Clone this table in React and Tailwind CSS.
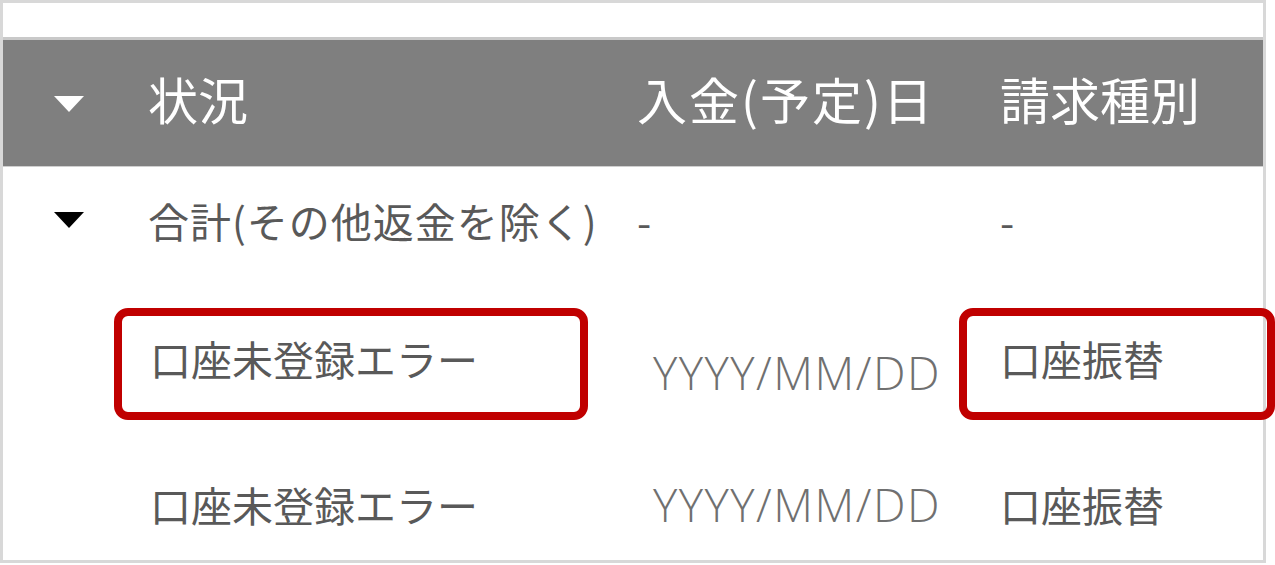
const rows = [
  { status: '口座未登録エラー', date: 'YYYY/MM/DD', type: '口座振替', marked: true },
  { status: '口座未登録エラー', date: 'YYYY/MM/DD', type: '口座振替', marked: false },
];

const jp = "font-['Noto_Sans_CJK_JP','Noto_Sans',sans-serif]";

const Caret = ({ color }) => (
  <svg width="32" height="18" viewBox="0 0 32 18">
    <polygon points="1,1 31,1 16,17" fill={color} />
  </svg>
);

const App = () => {
  return (
    <div className="w-[1275px] h-[565px] bg-white overflow-hidden">
      <div className={`relative w-[1266px] h-[563px] border-[3px] border-[#d8d8d8] ${jp}`}>
        <div className="h-[34px]" />

        {/* header */}
        <div className="flex items-center h-[130px] pb-[10px] bg-[#7f7f7f] border-t-[3px] border-[#c9c9c9] border-b border-b-[#cfcfcf] text-white text-[50px] leading-none">
          <div className="w-[145px] pl-[50px] pt-[12px] flex">
            <Caret color="#ffffff" />
          </div>
          <div className="w-[489px]">状況</div>
          <div className="w-[363px] tracking-[2px]">入金(予定)日</div>
          <div className="flex-1">請求種別</div>
        </div>

        {/* total row */}
        <div className="flex items-center h-[116px] pb-[10px] text-[#595959] text-[41px] leading-none">
          <div className="w-[145px] pl-[50px] flex">
            <Caret color="#000000" />
          </div>
          <div className="w-[489px] tracking-[1px]">合計(その他返金を除く)</div>
          <div className="w-[363px]">-</div>
          <div className="flex-1">-</div>
        </div>

        {rows.map((row, i) => (
          <div
            key={i}
            className={`flex items-center ${i === 0 ? 'h-[158px] pt-[2px]' : 'h-[120px] pt-[16px]'} pb-[10px] text-[#595959] text-[41px] leading-none`}
          >
            <div className="w-[145px]" />
            <div className="relative w-[489px] pl-[2px]">
              {row.marked && (
                <div className="absolute left-[-34px] top-[-30px] w-[474px] h-[112px] border-[8px] border-[#c00000] rounded-[14px]" />
              )}
              <span className="relative">{row.status}</span>
            </div>
            <div className={`w-[363px] pl-[16px] font-['Open_Sans',sans-serif] text-[46px] tracking-[1.5px] font-light text-[#707070] ${row.marked ? 'pt-[28px]' : ''}`}>
              {row.date}
            </div>
            <div className="relative flex-1">
              {row.marked && (
                <div className="absolute left-[-41px] top-[-30px] w-[316px] h-[112px] border-[8px] border-[#c00000] rounded-[14px]" />
              )}
              <span className="relative">{row.type}</span>
            </div>
          </div>
        ))}
      </div>
    </div>
  );
};

export default App;
